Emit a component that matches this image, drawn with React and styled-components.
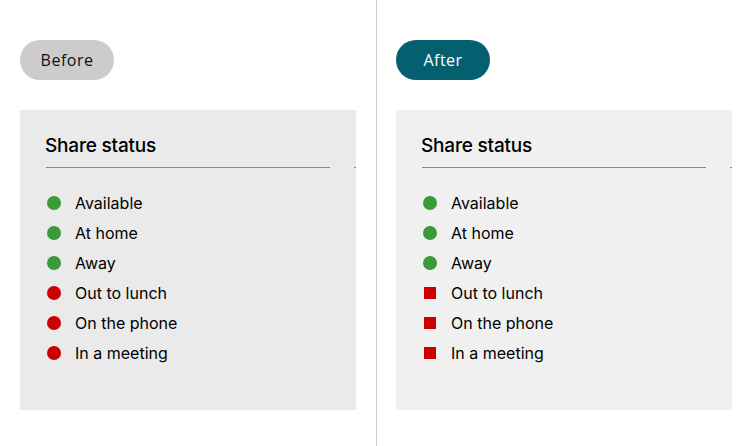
import React from "react";
import styled, { createGlobalStyle } from "styled-components";

const Global = createGlobalStyle`
  html, body { margin: 0; padding: 0; background: #ffffff; }
  body { font-family: Inter, "Liberation Sans", sans-serif; color: #000; }
`;

const Page = styled.div`
  display: grid;
  grid-template-columns: 376px 1px 1fr;
  width: 752px;
  height: 446px;
  overflow: hidden;
`;

const Divider = styled.div`
  background: #cccccc;
`;

const Panel = styled.section`
  display: flex;
  flex-direction: column;
  align-items: flex-start;
  padding: 40px 0 0 ${(p) => p.$inset}px;
  gap: 30px;
`;

const Pill = styled.div`
  box-sizing: border-box;
  width: 94px;
  height: 40px;
  border-radius: 20px;
  display: flex;
  align-items: center;
  justify-content: center;
  font-family: "Open Sans", "Liberation Sans", sans-serif;
  font-size: 16px;
  letter-spacing: 0.5px;
  background: ${(p) => (p.$active ? "#045f6e" : "#cccccc")};
  color: ${(p) => (p.$active ? "#ffffff" : "#111111")};
`;

const Card = styled.div`
  box-sizing: border-box;
  width: 336px;
  height: 300px;
  padding: 24px 0 0 26px;
  background: ${(p) => p.$bg};
  display: flex;
  flex-direction: column;
`;

const Title = styled.h2`
  margin: 0;
  font-family: Inter, "Liberation Sans", sans-serif;
  font-size: 19px;
  line-height: 23px;
  font-weight: 500;
  letter-spacing: -0.2px;
  color: #000;
  margin-left: -1px;
`;

const RuleRow = styled.div`
  display: flex;
  justify-content: space-between;
  margin-top: 10px;
  height: 1px;
`;

const Rule = styled.div`
  width: 284px;
  height: 1px;
  background: #8a8a8a;
`;

const Tick = styled.div`
  width: 2px;
  height: 1px;
  background: #8a8a8a;
`;

const List = styled.ul`
  list-style: none;
  margin: 20px 0 0;
  padding: 0;
  display: flex;
  flex-direction: column;
`;

const Item = styled.li`
  display: flex;
  align-items: center;
  height: 30px;
  gap: 13px;
  font-size: 16px;
  color: #000;
`;

const Slot = styled.span`
  width: 16px;
  height: 16px;
  display: flex;
  align-items: center;
  justify-content: center;
  flex: none;
`;

const Marker = styled.span`
  display: block;
  width: ${(p) => (p.$square ? 12 : 14)}px;
  height: ${(p) => (p.$square ? 12 : 14)}px;
  border-radius: ${(p) => (p.$square ? 0 : "50%")};
  background: ${(p) => p.$color};
`;

const statuses = [
  { label: "Available", busy: false },
  { label: "At home", busy: false },
  { label: "Away", busy: false },
  { label: "Out to lunch", busy: true },
  { label: "On the phone", busy: true },
  { label: "In a meeting", busy: true },
];

function StatusCard({ bg, squares }) {
  return (
    <Card $bg={bg}>
      <Title>Share status</Title>
      <RuleRow>
        <Rule />
        <Tick />
      </RuleRow>
      <List>
        {statuses.map((s) => (
          <Item key={s.label}>
            <Slot>
              <Marker
                $color={s.busy ? "#cc0000" : "#389b38"}
                $square={squares && s.busy}
              />
            </Slot>
            {s.label}
          </Item>
        ))}
      </List>
    </Card>
  );
}

export default function App() {
  return (
    <>
      <Global />
      <Page>
        <Panel $inset={20}>
          <Pill>Before</Pill>
          <StatusCard bg="#eaeaea" squares={false} />
        </Panel>
        <Divider />
        <Panel $inset={19}>
          <Pill $active>After</Pill>
          <StatusCard bg="#f0f0f0" squares />
        </Panel>
      </Page>
    </>
  );
}
